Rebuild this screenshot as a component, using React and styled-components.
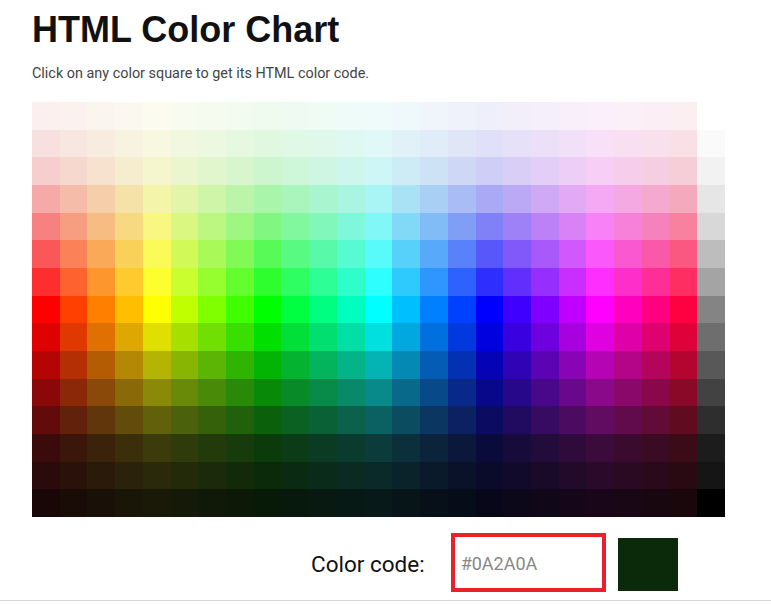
import React, { useState } from 'react';
import styled, { createGlobalStyle } from 'styled-components';

const GlobalStyle = createGlobalStyle`
    body {
        margin: 0;
        background: #FFFFFF;
        font-family: Roboto, 'Liberation Sans', Arial, sans-serif;
    }
`;

// lightness / saturation per row, red column of the chart
const ROWS = [
    [0.96, 0.6], [0.925, 0.63], [0.886, 0.69], [0.812, 0.79], [0.737, 0.88],
    [0.663, 0.94], [0.588, 0.99], [0.5, 1], [0.439, 0.99], [0.361, 0.957],
    [0.286, 0.89], [0.212, 0.796], [0.137, 0.686], [0.102, 0.615], [0.063, 0.5625],
];

const GRAYS = [
    '#FAFAFA', '#F2F2F2', '#E6E6E6', '#D8D8D8', '#BDBDBD', '#A4A4A4', '#848484',
    '#6E6E6E', '#585858', '#424242', '#2E2E2E', '#1C1C1C', '#151515', '#000000',
];

const hex = v => Math.round(v * 255).toString(16).padStart(2, '0').toUpperCase();

function hslToHex(h, s, l) {
    const c = (1 - Math.abs(2 * l - 1)) * s;
    const x = c * (1 - Math.abs(((h / 60) % 2) - 1));
    const m = l - c / 2;
    let rgb;
    if (h < 60) rgb = [c, x, 0];
    else if (h < 120) rgb = [x, c, 0];
    else if (h < 180) rgb = [0, c, x];
    else if (h < 240) rgb = [0, x, c];
    else if (h < 300) rgb = [x, 0, c];
    else rgb = [c, 0, x];
    return '#' + rgb.map(v => hex(v + m)).join('');
}

const Page = styled.div`
    padding: 9px 0 8px 32px;
    border-bottom: 1px solid #D6D6D6;
`;

const Title = styled.h1`
    margin: 0;
    font-family: 'Liberation Sans', Arial, sans-serif;
    font-weight: 700;
    font-size: 36px;
    line-height: 42px;
    color: #111111;
`;

const Intro = styled.p`
    margin: 13px 0 0;
    font-size: 14.4px;
    line-height: 20px;
    color: #444444;
`;

const Chart = styled.div`
    margin-top: 18px;
    width: 693px;
    height: 415px;
    display: grid;
    grid-template-columns: repeat(25, 1fr);
    grid-template-rows: repeat(15, 1fr);
`;

const Cell = styled.div`
    background: ${p => p.$color || 'transparent'};
    cursor: ${p => p.$color ? 'pointer' : 'default'};
`;

const Controls = styled.div`
    margin: 16px 0 0 279px;
    display: flex;
    align-items: flex-start;
`;

const Label = styled.span`
    margin-top: 18px;
    margin-right: 26px;
    font-size: 22.5px;
    line-height: 26px;
    color: #111111;
`;

const CodeInput = styled.input`
    box-sizing: border-box;
    width: 155px;
    height: 59px;
    padding: 2px 6px 0;
    border: 4px solid #E8212B;
    outline: none;
    font-family: Roboto, 'Liberation Sans', Arial, sans-serif;
    font-size: 18px;
    color: #888888;
    background: #FFFFFF;
`;

const Swatch = styled.div`
    width: 60px;
    height: 53px;
    margin-top: 5px;
    margin-left: 12px;
    background: ${p => p.$color};
`;

export default function App() {
    const [code, setCode] = useState('#0A2A0A');

    const cells = [];
    ROWS.forEach(([l, s], r) => {
        for (let c = 0; c < 24; c++) {
            cells.push(hslToHex(c * 15, s, l));
        }
        cells.push(r === 0 ? null : GRAYS[r - 1]);
    });

    return (
        <>
            <GlobalStyle />
            <Page>
                <Title>HTML Color Chart</Title>
                <Intro>Click on any color square to get its HTML color code.</Intro>
                <Chart>
                    {cells.map((color, i) => (
                        <Cell key={i} $color={color}
                            onClick={() => color && setCode(color)} />
                    ))}
                </Chart>
                <Controls>
                    <Label>Color code:</Label>
                    <CodeInput readOnly value={code} />
                    <Swatch $color={code} />
                </Controls>
            </Page>
        </>
    );
}
